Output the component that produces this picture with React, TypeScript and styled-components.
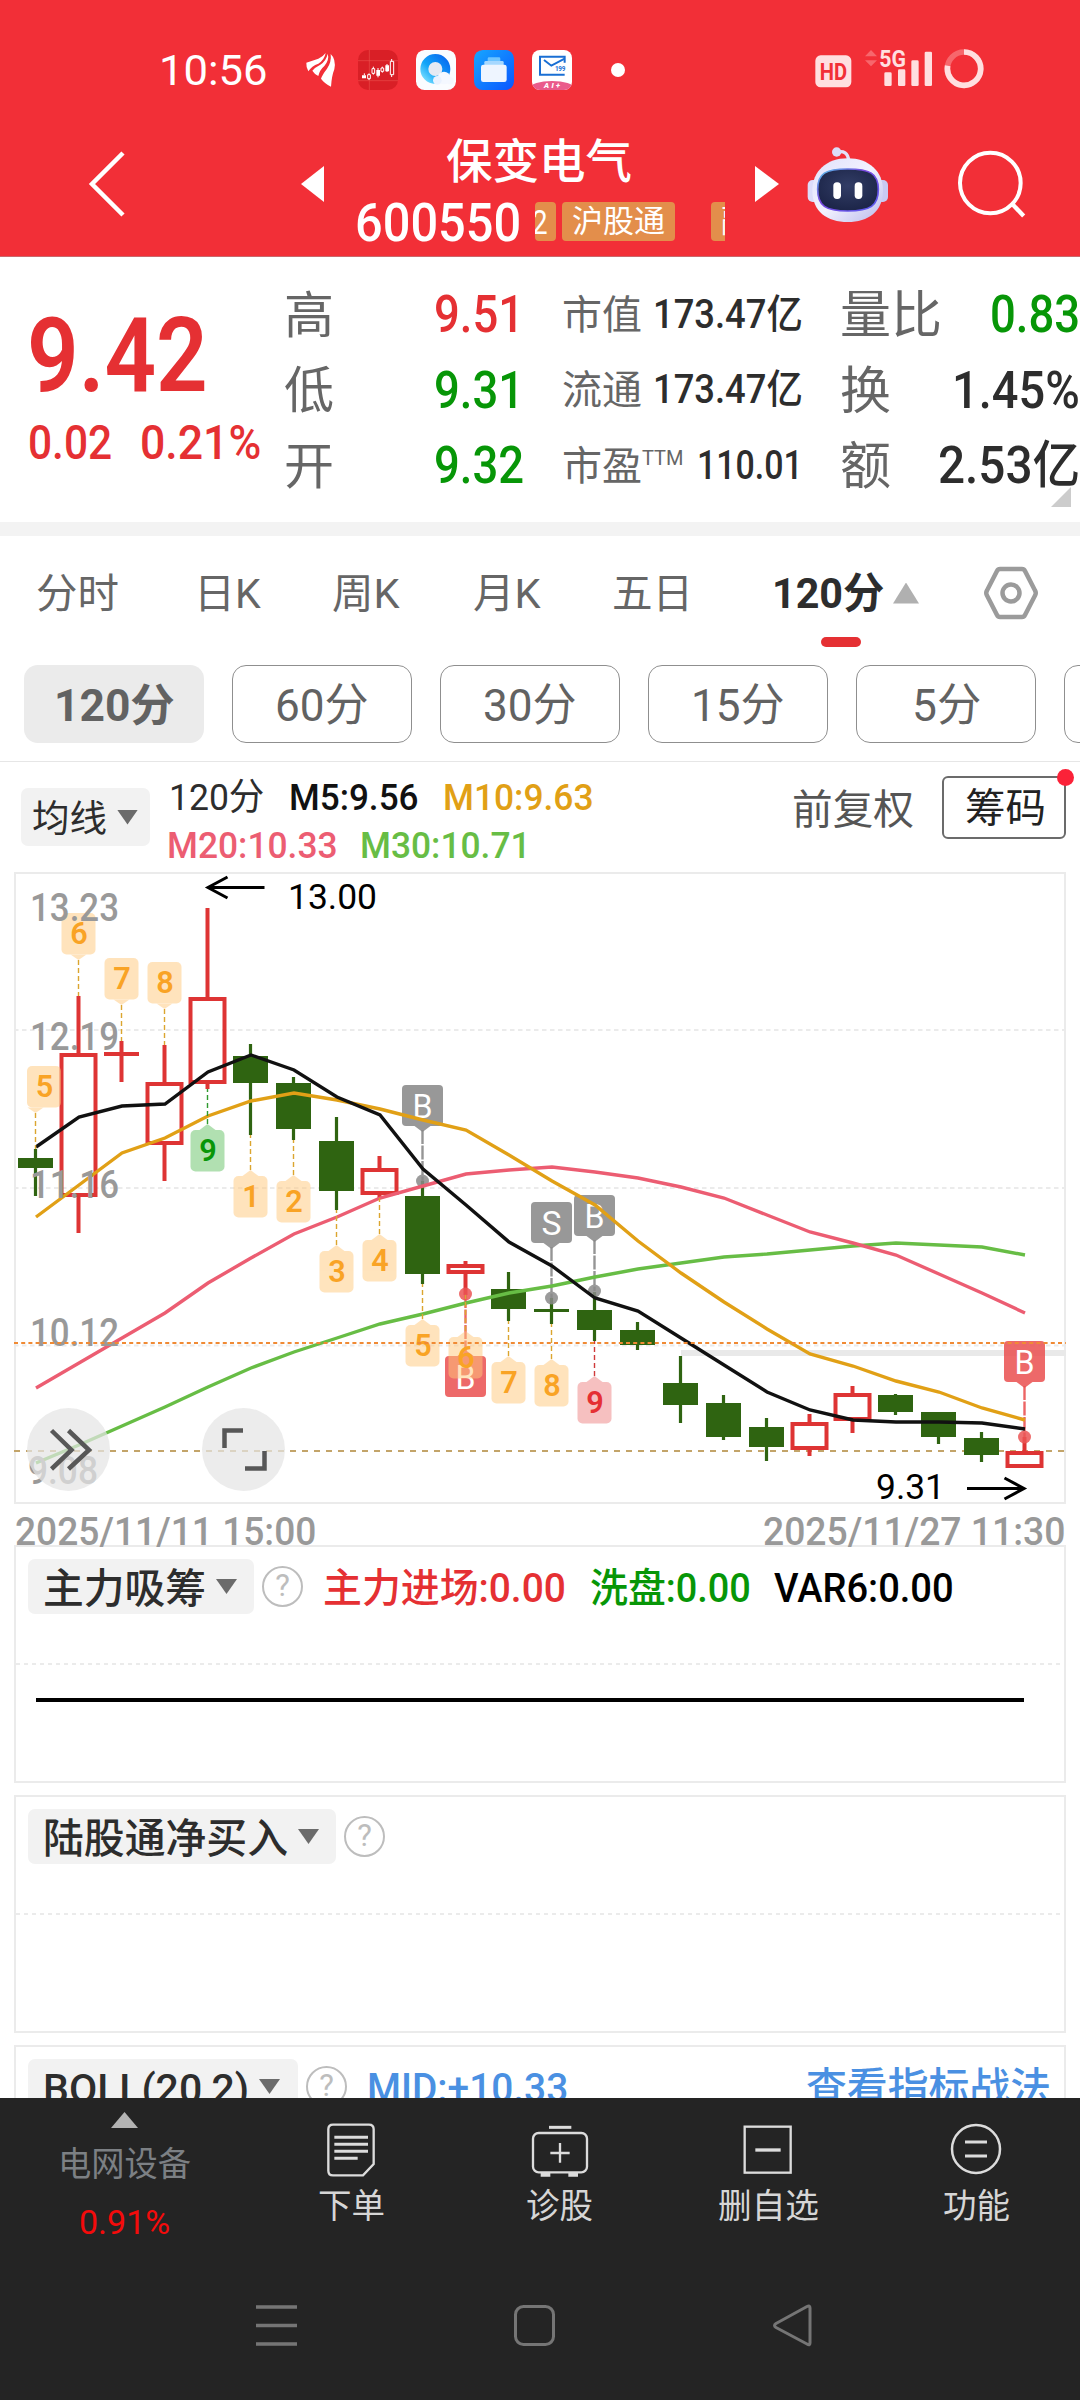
import React, { useLayoutEffect, useRef, useState } from 'react';
import styled, { createGlobalStyle } from 'styled-components';

const FONT = `Roboto, "Noto Sans CJK SC", sans-serif`;
const RED = '#e53033';
const GREEN = '#079607';
const DARK = '#2d2d2d';
const GREY = '#666';

const GlobalStyle = createGlobalStyle`
  * { box-sizing: border-box; }
  body { margin: 0; background: #fff; font-family: ${FONT}; }
  svg { display: block; flex: none; }
`;

/* ---------- condensed text that fills a given width ---------- */

const FitBox = styled.span<{ $w: number; $size: number; $weight: number; $color: string; $ml: number; $dy: number }>`
  display: block;
  flex: none;
  width: ${p => p.$w}px;
  margin-left: ${p => p.$ml}px;
  padding-top: ${p => p.$dy}px;
  font-size: ${p => p.$size}px;
  font-weight: ${p => p.$weight};
  color: ${p => p.$color};
  line-height: 1;
  white-space: pre;
`;
const FitInner = styled.span`
  display: inline-block;
  transform-origin: 0 50%;
`;

type FitProps = { w: number; size: number; weight?: number; color?: string; ml?: number; dy?: number; children: React.ReactNode };

function Fit({ w, size, weight = 400, color = 'inherit', ml = 0, dy = 0, children }: FitProps) {
  const ref = useRef<HTMLSpanElement>(null);
  const [scale, setScale] = useState(1);
  useLayoutEffect(() => {
    if (ref.current) setScale(w / ref.current.offsetWidth);
  }, [w, size, weight]);
  return (
    <FitBox $w={w} $size={size} $weight={weight} $color={color} $ml={ml} $dy={dy}>
      <FitInner ref={ref} style={{ transform: `scaleX(${scale})` }}>{children}</FitInner>
    </FitBox>
  );
}

/* ---------- page ---------- */

const Screen = styled.div`
  width: 1080px;
  height: 2400px;
  display: flex;
  flex-direction: column;
  overflow: hidden;
  background: #fff;
`;

const Header = styled.header`
  flex: none;
  height: 257px;
  background: #f22f37;
  border-bottom: 1px solid #c9686c;
  color: #fff;
`;

const StatusBar = styled.div`
  height: 112px;
  padding: 27px 96px 0 159px;
  display: flex;
  align-items: center;
`;
const AppIcons = styled.div`
  display: flex;
  align-items: center;
  gap: 18px;
  margin-left: 37px;
`;
const Dot = styled.i`
  width: 14px;
  height: 14px;
  border-radius: 50%;
  background: #fff;
  margin-left: 39px;
`;
const StatusRight = styled.div`
  display: flex;
  align-items: center;
  margin: -2px 0 0 auto;
`;

const TitleBar = styled.div`
  height: 144px;
  display: grid;
  grid-template-columns: 301px 23px 431px 24px 28px 82px 68px 1fr;
  align-items: center;
`;
const BackSlot = styled.div`
  padding-left: 88px;
`;
const TitleBlock = styled.div`
  height: 144px;
  padding-top: 23px;
  display: flex;
  flex-direction: column;
  gap: 15px;
`;
const NameLine = styled.div`
  height: 50px;
  padding-left: 122px;
`;
const CodeLine = styled.div`
  height: 42px;
  padding-left: 31px;
  display: flex;
  align-items: center;
`;
const TagStrip = styled.div`
  width: 190px;
  height: 39px;
  margin-left: 14px;
  display: flex;
  overflow: hidden;
`;
const Tag = styled.span<{ $w: number; $gap: number; $pad: number }>`
  flex: none;
  width: ${p => p.$w}px;
  height: 39px;
  margin-right: ${p => p.$gap}px;
  padding-left: ${p => p.$pad}px;
  border-radius: 4px;
  background: #e38e4b;
  font-size: 31px;
  line-height: 39px;
  white-space: nowrap;
`;

const Quote = styled.section`
  flex: none;
  position: relative;
  height: 265px;
  display: grid;
  grid-template-columns: 284px 278px 278px 240px;
`;
const PriceCell = styled.div`
  padding: 47px 0 0 27px;
`;
const ChangeLine = styled.div`
  display: flex;
  margin-top: 10px;
  padding-left: 1px;
`;
const Stats = styled.div`
  padding-top: 20px;
  display: flex;
  flex-direction: column;
`;
const StatRow = styled.div<{ $w: number; $size: number }>`
  width: ${p => p.$w}px;
  height: 75.5px;
  display: flex;
  align-items: center;
  justify-content: space-between;
  font-size: ${p => p.$size}px;
  line-height: 1;
  color: ${GREY};
  white-space: nowrap;
  sup { font-size: 20px; line-height: 0; vertical-align: 15px; }
`;
const StatLabel = styled.span`
  padding-top: 2px;
`;
const Corner = styled.i`
  position: absolute;
  right: 9px;
  bottom: 15px;
  border-style: solid;
  border-width: 0 0 20px 20px;
  border-color: transparent transparent #ccc transparent;
`;
const Band = styled.div`
  flex: none;
  height: 14px;
  background: #f3f3f3;
`;

const Tabs = styled.nav`
  flex: none;
  height: 129px;
  padding: 2px 42px 0 36px;
  display: flex;
  align-items: flex-start;
  color: ${GREY};
`;
const Tab = styled.div<{ $ml: number }>`
  margin-left: ${p => p.$ml}px;
  height: 110px;
  display: flex;
  align-items: center;
`;
const ActiveTab = styled.div`
  margin-left: 79px;
  height: 111px;
  width: 145px;
  display: grid;
  grid-template-rows: 99px 10px;
  justify-content: start;
`;
const ActiveLabel = styled.div`
  display: flex;
  align-items: center;
  gap: 9px;
  padding-top: 11px;
`;
const Underline = styled.i`
  width: 40px;
  height: 10px;
  margin-left: 49px;
  border-radius: 5px;
  background: ${RED};
`;
const Tri = styled.i<{ $w: number; $h: number; $color: string; $up?: boolean; $ml?: number }>`
  flex: none;
  width: ${p => p.$w}px;
  height: ${p => p.$h}px;
  margin-left: ${p => p.$ml ?? 0}px;
  background: ${p => p.$color};
  clip-path: ${p => (p.$up ? 'polygon(50% 0, 100% 100%, 0 100%)' : 'polygon(0 0, 100% 0, 50% 100%)')};
`;

const Chips = styled.div`
  flex: none;
  height: 97px;
  padding-left: 24px;
  display: flex;
  gap: 28px;
  overflow: hidden;
  border-bottom: 1px solid #e6e6e6;
`;
const Chip = styled.div<{ $on?: boolean }>`
  flex: none;
  width: 180px;
  height: 78px;
  display: flex;
  align-items: center;
  justify-content: center;
  border-radius: 14px;
  border: ${p => (p.$on ? 'none' : '1.5px solid #8f8f8f')};
  background: ${p => (p.$on ? '#ebebeb' : '#fff')};
  color: #626262;
`;

const MaBar = styled.div`
  flex: none;
  height: 110px;
  padding: 0 14px 0 21px;
  display: flex;
`;
const Picker = styled.div<{ $w: number; $h: number; $pad: number; $mt: number }>`
  flex: none;
  width: ${p => p.$w}px;
  height: ${p => p.$h}px;
  margin-top: ${p => p.$mt}px;
  padding-left: ${p => p.$pad}px;
  display: flex;
  align-items: center;
  border-radius: 7px;
  background: #f2f2f2;
  color: ${DARK};
`;
const MaLegend = styled.div`
  width: 460px;
  padding-top: 11px;
  display: grid;
  grid-template-rows: 48px 48px;
  align-items: center;
`;
const Line = styled.div`
  display: flex;
  align-items: center;
`;
const Adjust = styled.div`
  margin: 28px 0 0 auto;
`;
const ChipsButton = styled.div`
  position: relative;
  width: 124px;
  height: 63px;
  margin: 14px 0 0 28px;
  padding-left: 21px;
  display: flex;
  align-items: center;
  border: 2px solid #6b6b6b;
  border-radius: 6px;
`;
const Badge = styled.i`
  position: absolute;
  right: -10px;
  top: -9px;
  width: 17px;
  height: 17px;
  border-radius: 50%;
  background: #fb2238;
`;

const ChartWrap = styled.section`
  flex: none;
  height: 632px;
`;
const Dates = styled.div`
  flex: none;
  height: 41px;
  padding: 9px 15px 0 15px;
  display: flex;
  justify-content: space-between;
`;

const Panels = styled.section`
  flex: none;
  height: 553px;
  padding: 0 14px;
  display: flex;
  flex-direction: column;
  gap: 12px;
  overflow: hidden;
`;
const Panel = styled.div`
  flex: none;
  height: 238px;
  border: 2px solid #ebebeb;
`;
const PanelHead = styled.div`
  height: 80px;
  padding: 0 12px;
  display: flex;
  align-items: flex-start;
`;
const HeadText = styled.div`
  height: 83px;
  display: flex;
  align-items: center;
`;
const Help = styled.span`
  flex: none;
  width: 41px;
  height: 41px;
  margin: 19px 0 0 8px;
  border: 2.5px solid #bdbdbd;
  border-radius: 50%;
  font-size: 31px;
  line-height: 36px;
  text-align: center;
  color: #bdbdbd;
`;
const MidLine = styled.div`
  height: 2px;
  margin-top: 36px;
  background: repeating-linear-gradient(90deg, #ebebeb 0 4px, #fff 4px 8px);
`;
const FlatLine = styled.div`
  height: 4px;
  margin: 33px 40px 0 20px;
  background: #000;
`;

const Footer = styled.footer`
  flex: 1;
  background: #242424;
`;
const Actions = styled.div`
  height: 170px;
  display: grid;
  grid-template-columns: 247px 208px 209px 208px 208px;
  color: #d6d6d6;
`;
const Sector = styled.div`
  padding: 14px 0 0 58px;
  display: flex;
  flex-direction: column;
`;
const Action = styled.div`
  display: flex;
  flex-direction: column;
  align-items: center;
  gap: 11px;
  padding-top: 24px;
`;
const SystemNav = styled.div`
  height: 132px;
  padding: 35px 0 0 254px;
  display: flex;
  gap: 214px;
`;

/* ---------- chart data ---------- */

const X = (i: number) => 35.5 + 43 * i;

// [up, high, bodyTop, bodyBottom, low]
const candles: [number, number, number, number, number][] = [
  [0, 1149, 1158, 1168, 1196], [1, 996, 1053, 1197, 1233], [1, 1041, 1052, 1056, 1082], [1, 1045, 1082, 1145, 1181],
  [1, 908, 997, 1084, 1089], [0, 1044, 1056, 1083, 1135], [0, 1077, 1083, 1129, 1140], [0, 1117, 1141, 1191, 1210],
  [1, 1156, 1168, 1195, 1198], [0, 1181, 1196, 1274, 1284], [1, 1261, 1264, 1274, 1295], [0, 1272, 1289, 1309, 1321],
  [0, 1298, 1309, 1312, 1324], [0, 1292, 1310, 1330, 1341], [0, 1322, 1330, 1345, 1350], [0, 1356, 1383, 1405, 1423],
  [0, 1395, 1403, 1437, 1440], [0, 1418, 1427, 1447, 1461], [1, 1414, 1422, 1450, 1456], [1, 1386, 1393, 1421, 1433],
  [0, 1394, 1395, 1412, 1415], [0, 1412, 1412, 1437, 1444], [0, 1432, 1438, 1455, 1462], [1, 1437, 1451, 1468, 1468],
];

const averages: [string, number[]][] = [
  ['#67bd45', [1463, 1445, 1426, 1407, 1387, 1368, 1352, 1338, 1324, 1314, 1303, 1293, 1286, 1277, 1269, 1263, 1257, 1254, 1250, 1246, 1243, 1245, 1247, 1255]],
  ['#ec5d72', [1388, 1363, 1338, 1313, 1283, 1258, 1234, 1217, 1198, 1186, 1174, 1170, 1167, 1172, 1178, 1187, 1198, 1215, 1232, 1243, 1255, 1274, 1293, 1313]],
  ['#e1a016', [1217, 1185, 1153, 1138, 1116, 1101, 1093, 1100, 1109, 1120, 1130, 1155, 1181, 1205, 1241, 1273, 1302, 1329, 1354, 1366, 1381, 1392, 1408, 1420]],
  ['#111', [1147, 1117, 1106, 1104, 1072, 1055, 1070, 1097, 1115, 1169, 1205, 1242, 1266, 1298, 1311, 1338, 1365, 1392, 1410, 1420, 1422, 1422, 1423, 1429]],
];

type Tone = 'o' | 'g' | 'r';
const tones: Record<Tone, { bg: string; fg: string; line: string }> = {
  o: { bg: '#ffc97c', fg: '#f9a325', line: '#dba52f' },
  g: { bg: '#66c266', fg: '#089608', line: '#2f9a2f' },
  r: { bg: '#ee8282', fg: '#e53033', line: '#cf3a3a' },
};

// [index, digit, tip y, wick end y, above the candle, tone]
const counts: [number, string, number, number, boolean, Tone][] = [
  [0, '5', 1113, 1149, true, 'o'], [1, '6', 960, 996, true, 'o'], [2, '7', 1005, 1041, true, 'o'], [3, '8', 1009, 1045, true, 'o'],
  [4, '9', 1124, 1089, false, 'g'], [5, '1', 1170, 1135, false, 'o'], [6, '2', 1175, 1140, false, 'o'], [7, '3', 1245, 1210, false, 'o'],
  [8, '4', 1234, 1198, false, 'o'], [9, '5', 1319, 1284, false, 'o'], [10, '6', 1331, 1295, false, 'o'], [11, '7', 1356, 1321, false, 'o'],
  [12, '8', 1359, 1324, false, 'o'], [13, '9', 1376, 1341, false, 'r'],
];

// [index, letter, badge top, dot y, above the candle, colour]
const signals: [number, string, number, number, boolean, string][] = [
  [9, 'B', 1085, 1181, true, '#8a8a8a'], [12, 'S', 1202, 1298, true, '#8a8a8a'], [13, 'B', 1195, 1291, true, '#8a8a8a'],
  [10, 'B', 1356, 1294, false, '#eb5555'], [23, 'B', 1341, 1437, true, '#eb5555'],
];

const axis: [string, number, number, number][] = [
  ['13.23', 30, 921, 89], ['12.19', 30, 1050, 89], ['11.16', 30, 1198, 89], ['10.12', 30, 1346, 89], ['9.08', 28, 1484, 70],
];

function KLineChart() {
  return (
    <svg width="1080" height="632" viewBox="0 872 1080 632" fontFamily="Roboto, sans-serif">
      <rect x="15" y="873" width="1050" height="630" fill="#fff" stroke="#ebebeb" strokeWidth="2" />
      {[1030, 1188, 1345.5].map(y => (
        <path key={y} d={`M14 ${y}H1066`} stroke="#ebebeb" strokeWidth="2" strokeDasharray="4.5 3.5" />
      ))}
      <path d="M681 1353H1066" stroke="#e9e9e9" strokeWidth="6" />
      <path d="M14 1451H1066" stroke="#c3a469" strokeWidth="2" strokeDasharray="6 6" />

      {candles.map(([up, high, top, bottom, low], i) => {
        const x = X(i);
        if (i === 2) {
          return <path key={i} d={`M${x} ${high}V${low}M${x - 17.5} 1054H${x + 17.5}`} stroke="#de3434" strokeWidth="4" />;
        }
        return up ? (
          <g key={i} stroke="#de3434" fill="none">
            <path d={`M${x} ${high}V${top + 2}M${x} ${bottom - 2}V${low}`} strokeWidth="4" />
            <rect x={x - 17} y={top + 2} width="34" height={bottom - top - 4} strokeWidth="4" />
          </g>
        ) : (
          <g key={i} fill="#2f6411">
            <rect x={x - 1.6} y={high} width="3.2" height={low - high} />
            <rect x={x - 17.5} y={top} width="35" height={bottom - top} />
          </g>
        );
      })}

      {signals.map(([i, ch, top, dot, above, color]) => {
        const x = X(i);
        return (
          <g key={i}>
            <path d={above ? `M${x} ${top + 45}V${dot}` : `M${x} ${dot}V${top - 5}`} stroke={color} strokeWidth="2.4" strokeDasharray="14 1.5" opacity=".9" />
            <g fill={color} opacity=".88">
              <rect x={x - 20.5} y={top} width="41" height="41" rx="4" />
              <path d={above ? `M${x - 8} ${top + 41}h16l-8 6z` : `M${x - 8} ${top}h16l-8 -6z`} />
            </g>
            <circle cx={x} cy={dot} r="6.5" fill={color} opacity=".85" />
            <text x={x} y={top + 33} fontSize="34" fill="#fff" textAnchor="middle" textLength="20" lengthAdjust="spacingAndGlyphs">{ch}</text>
          </g>
        );
      })}

      {averages.map(([color, ys]) => (
        <polyline key={color} points={ys.map((y, i) => `${X(i) + 0.5},${y}`).join(' ')} fill="none" stroke={color} strokeWidth="3.4" />
      ))}

      {counts.map(([i, n, tip, wick, above, tone]) => {
        const x = X(i);
        const cx = i === 0 ? 44 : x;
        const top = above ? tip - 47 : tip + 6;
        const t = tones[tone];
        return (
          <g key={i}>
            <path d={`M${x} ${tip}V${wick}`} stroke={t.line} strokeWidth="1.4" strokeDasharray="5 3" />
            <g fill={t.bg} opacity=".5">
              <rect x={cx - 17} y={top} width="34" height="41.5" rx="5" />
              <path d={above ? `M${x - 8} ${top + 41.5}h16l-8 5.5z` : `M${x - 8} ${top}h16l-8 -6z`} />
            </g>
            <text x={cx + 0.5} y={top + 31} fontSize="32" fontWeight="600" fill={t.fg} textAnchor="middle" textLength="17.500" lengthAdjust="spacingAndGlyphs">{n}</text>
          </g>
        );
      })}

      {axis.map(([label, x, y, len]) => (
        <text key={label} x={x} y={y} fontSize="39.500" fontWeight="500" fill="#999" textLength={len} lengthAdjust="spacingAndGlyphs">{label}</text>
      ))}
      <path d="M14 1343H1066" stroke="#f08a34" strokeWidth="2" strokeDasharray="4 3.2" />

      <g stroke="#000" strokeWidth="3" fill="none">
        <path d="M264.500 887.500H208M227.500 877L208 887.500L227.500 898" />
        <path d="M967 1488.500H1024M1004.500 1478L1024 1488.500L1004.500 1499" />
      </g>
      <text x="288" y="909" fontSize="35" fill="#000" textLength="89" lengthAdjust="spacingAndGlyphs">13.00</text>
      <text x="876" y="1499" fontSize="35" fill="#000" textLength="69" lengthAdjust="spacingAndGlyphs">9.31</text>

      <circle cx="68.500" cy="1449.500" r="41.500" fill="#e4e4e4" opacity=".72" />
      <circle cx="243.500" cy="1449.500" r="41.500" fill="#e4e4e4" opacity=".72" />
      <g stroke="#575757" strokeWidth="4.500" fill="none">
        <path d="M51.500 1430.500L71.500 1450L51.500 1469M68.500 1430.500L89 1450L68.500 1469" />
        <path d="M224.500 1448V1430.500H243M264.500 1451V1468.500H245" />
      </g>
    </svg>
  );
}

/* ---------- status bar drawings ---------- */

function StatusIcons() {
  return (
    <AppIcons>
      <svg width="35" height="36" viewBox="10 66 105 108" fill="#fff">
        <path d="M14 98Q32 92 50 86Q64 80 72 69Q68 90 50 101Q30 108 20 124Q13 112 14 98Z" />
        <path d="M78 71Q84 88 68 108Q54 120 50 138Q38 132 32 122Q40 112 56 104Q74 92 78 71Z" />
        <path d="M87 72Q104 88 98 118Q90 138 88 170Q68 160 58 146Q62 134 76 116Q90 96 87 72Z" />
      </svg>
      <svg width="40" height="40" viewBox="0 0 120 120">
        <rect width="120" height="120" rx="30" fill="#d91f26" />
        <path d="M0 32H120M0 92H120M34 0V120" stroke="#ee5a55" strokeWidth="1.500" />
        <path d="M12 76h12v9h-12zM55 60h11v17h-11zM82 46h11v18h-11z" fill="#fff" />
        <path d="M19 70v6M60 54v28M87 42v24M33 70v20M46 50v24M73 50v18M101 27v54" stroke="#fff" strokeWidth="3" />
        <path d="M29 74h8v12h-8zM42 56h8v14h-8zM69 54h8v10h-8zM97 34h10v40h-10z" fill="#d91f26" stroke="#fff" strokeWidth="3" />
      </svg>
      <svg width="40" height="40" viewBox="0 0 120 120">
        <defs>
          <linearGradient id="qb" x1="1" y1="0" x2="0" y2="1"><stop offset="0" stopColor="#0a6cf0" /><stop offset=".6" stopColor="#12a5f8" /><stop offset="1" stopColor="#74dcff" /></linearGradient>
          <linearGradient id="fl" x1="0" y1="0" x2="1" y2="1"><stop offset="0" stopColor="#16a6ff" /><stop offset="1" stopColor="#0a55ff" /></linearGradient>
        </defs>
        <rect width="120" height="120" rx="26" fill="#fafcff" />
        <circle cx="58" cy="57" r="33" fill="#e6eaf3" stroke="url(#qb)" strokeWidth="24" />
        <circle cx="84" cy="84" r="19" fill="#f4f8ff" />
        <circle cx="64" cy="91" r="13" fill="#eaf2ff" />
        <circle cx="102" cy="92" r="11" fill="#f4f8ff" />
      </svg>
      <svg width="40" height="40" viewBox="0 0 120 120">
        <rect width="120" height="120" rx="26" fill="url(#fl)" />
        <rect x="41" y="22" width="38" height="14" rx="4" fill="#6ec4ff" />
        <rect x="31" y="33" width="58" height="16" rx="4" fill="#a6d8ff" />
        <rect x="21" y="44" width="77" height="52" rx="7" fill="#eef5ff" />
      </svg>
      <svg width="40" height="40" viewBox="0 0 120 120">
        <clipPath id="mc"><rect width="120" height="120" rx="24" /></clipPath>
        <g clipPath="url(#mc)">
          <rect width="120" height="120" fill="#fff" />
          <ellipse cx="60" cy="114" rx="66" ry="21" fill="#ea5b8b" />
          <path d="M98 38V20H24V74H98" fill="none" stroke="#1a6fd4" strokeWidth="6" />
          <path d="M36 30L58 47L98 26" fill="none" stroke="#1a6fd4" strokeWidth="6" />
          <text x="69" y="63" fontSize="19" fontWeight="700" fontFamily="Roboto" fill="#1a6fd4" textLength="31">199</text>
          <text x="36" y="115" fontSize="23" fontWeight="900" fontStyle="italic" fontFamily="Roboto" fill="#fff" textLength="48">AI+</text>
        </g>
      </svg>
    </AppIcons>
  );
}

function SignalIcons() {
  return (
    <svg width="169" height="44" viewBox="74 20 507 132">
      <rect x="75" y="45" width="108" height="96" rx="16" fill="#ffdfe0" />
      <text x="88" y="119" fontSize="74" fontWeight="700" fontFamily="Roboto" fill="#f22f37" textLength="82" lengthAdjust="spacingAndGlyphs">HD</text>
      <path d="M224 48L242 29L260 48ZM224 60L242 78L260 60Z" fill="#f7676c" />
      <text x="267" y="80" fontSize="74" fontWeight="700" fontFamily="Roboto" fill="#ffdfe0" textLength="80" lengthAdjust="spacingAndGlyphs">5G</text>
      <g fill="#ffdfe0">
        <rect x="282" y="96" width="22" height="41" rx="4" />
        <rect x="323" y="87" width="22" height="50" rx="4" />
        <rect x="363" y="60" width="22" height="77" rx="4" />
        <rect x="403" y="34" width="22" height="103" rx="4" />
      </g>
      <circle cx="521" cy="85" r="50" fill="none" stroke="#f7676c" strokeWidth="17" />
      <path d="M521 35A50 50 0 1 1 472 76" fill="none" stroke="#ffdfe0" strokeWidth="17" />
    </svg>
  );
}

function Robot() {
  return (
    <svg width="82" height="77" viewBox="50 312 246 231">
      <defs>
        <linearGradient id="rb" x1="0" y1="0" x2="1" y2="1"><stop offset="0" stopColor="#dfe1fb" /><stop offset=".5" stopColor="#f3f2ff" /><stop offset="1" stopColor="#b9b9ea" /></linearGradient>
        <linearGradient id="rf" x1="0" y1="0" x2="1" y2="1"><stop offset="0" stopColor="#55c8e8" /><stop offset=".4" stopColor="#7a48e0" /><stop offset="1" stopColor="#5a5cf0" /></linearGradient>
        <radialGradient id="rv" cx=".5" cy=".4" r=".6"><stop offset="0" stopColor="#323d66" /><stop offset="1" stopColor="#1c2548" /></radialGradient>
      </defs>
      <path d="M138 331Q172 322 175 356" fill="none" stroke="#e3e1f8" strokeWidth="10" />
      <circle cx="139" cy="330" r="14" fill="#dcdcf8" />
      <rect x="52" y="414" width="34" height="66" rx="15" fill="#dcdcfa" />
      <rect x="259" y="414" width="34" height="66" rx="15" fill="#c9c9f2" />
      <path d="M172 349C236 349 278 388 278 446C278 508 234 540 172 540C110 540 66 508 66 446C66 388 108 349 172 349Z" fill="url(#rb)" />
      <path d="M172 381C238 381 264 394 264 442C264 492 240 507 172 507C106 507 82 492 82 442C82 394 106 381 172 381Z" fill="url(#rv)" stroke="url(#rf)" strokeWidth="5" />
      <rect x="129" y="421" width="23" height="50" rx="11" fill="#fff" />
      <rect x="193" y="421" width="23" height="50" rx="11" fill="#fff" />
    </svg>
  );
}

/* ---------- repeated parts ---------- */

type PickProps = { w: number; tw: number; label: string };
const IndicatorPicker = ({ w, tw, label }: PickProps) => (
  <Picker $w={w} $h={55} $pad={15} $mt={12}>
    <Fit w={tw} size={41} weight={500} dy={5}>{label}</Fit>
    <Tri $w={21} $h={15} $color="#6b6b6b" $ml={10} />
  </Picker>
);

type StatProps = { w: number; size: number; label: React.ReactNode; vw: number; vs: number; value: string; color?: string };
const Stat = ({ w, size, label, vw, vs, value, color = DARK }: StatProps) => (
  <StatRow $w={w} $size={size}>
    <StatLabel>{label}</StatLabel>
    <Fit w={vw} size={vs} weight={500} color={color}>{value}</Fit>
  </StatRow>
);

export default function App() {
  return (
    <>
      <GlobalStyle />
      <Screen>
        <Header>
          <StatusBar>
            <Fit w={109} size={42} dy={2}>10:56</Fit>
            <StatusIcons />
            <Dot />
            <StatusRight><SignalIcons /></StatusRight>
          </StatusBar>
          <TitleBar>
            <BackSlot>
              <svg width="38" height="66" viewBox="0 0 38 66" fill="none" stroke="#fff" strokeWidth="4.500"><path d="M35 2L4 33L35 64" /></svg>
            </BackSlot>
            <svg width="23" height="36" viewBox="0 0 23 36" fill="#fff"><path d="M23 0V36L0 18Z" /></svg>
            <TitleBlock>
              <NameLine><Fit w={186} size={47} weight={500} dy={3}>保变电气</Fit></NameLine>
              <CodeLine>
                <Fit w={166} size={54} weight={500} dy={3}>600550</Fit>
                <TagStrip>
                  <Tag $w={21} $gap={6} $pad={0}><Fit w={16} size={33} ml={-3} dy={4}>2</Fit></Tag>
                  <Tag $w={113} $gap={36} $pad={10}>沪股通</Tag>
                  <Tag $w={60} $gap={0} $pad={10}>融</Tag>
                </TagStrip>
              </CodeLine>
            </TitleBlock>
            <svg width="24" height="36" viewBox="0 0 24 36" fill="#fff"><path d="M0 0V36L24 18Z" /></svg>
            <span />
            <Robot />
            <span />
            <svg width="70" height="70" viewBox="500 330 210 210" fill="none" stroke="#fff"><circle cx="600" cy="432" r="91" strokeWidth="12" /><path d="M663 492L700 531" strokeWidth="13" /></svg>
          </TitleBar>
        </Header>

        <Quote>
          <PriceCell>
            <Fit w={181} size={104} weight={600} color={RED}>9.42</Fit>
            <ChangeLine>
              <Fit w={84} size={49} weight={500} color={RED}>0.02</Fit>
              <Fit w={121} size={49} weight={500} color={RED} ml={28}>0.21%</Fit>
            </ChangeLine>
          </PriceCell>
          <Stats>
            <Stat w={240} size={50} label="高" vw={90} vs={51} value="9.51" color={RED} />
            <Stat w={240} size={50} label="低" vw={90} vs={51} value="9.31" color={GREEN} />
            <Stat w={240} size={50} label="开" vw={90} vs={51} value="9.32" color={GREEN} />
          </Stats>
          <Stats>
            <Stat w={241} size={40} label="市值" vw={150} vs={40} value="173.47亿" />
            <Stat w={241} size={40} label="流通" vw={150} vs={40} value="173.47亿" />
            <Stat w={241} size={40} label={<>市盈<sup>TTM</sup></>} vw={106} vs={40} value="110.01" />
          </Stats>
          <Stats>
            <Stat w={240} size={51} label="量比" vw={90} vs={51} value="0.83" color={GREEN} />
            <Stat w={240} size={51} label="换" vw={128} vs={51} value="1.45%" />
            <Stat w={240} size={51} label="额" vw={142} vs={51} value="2.53亿" />
          </Stats>
          <Corner />
        </Quote>
        <Band />

        <Tabs>
          <Tab $ml={0}><Fit w={83} size={41} dy={2}>分时</Fit></Tab>
          <Tab $ml={75}><Fit w={67} size={41} dy={2}>日K</Fit></Tab>
          <Tab $ml={71}><Fit w={68} size={41} dy={2}>周K</Fit></Tab>
          <Tab $ml={73}><Fit w={68} size={41} dy={2}>月K</Fit></Tab>
          <Tab $ml={71}><Fit w={81} size={41} dy={2}>五日</Fit></Tab>
          <ActiveTab>
            <ActiveLabel>
              <Fit w={112} size={42} weight={700} color={DARK} dy={2}>120分</Fit>
              <Tri $w={26} $h={21} $color="#b0b0b0" $up />
            </ActiveLabel>
            <Underline />
          </ActiveTab>
          <Tab $ml={66}>
            <svg width="56" height="54" viewBox="0 0 56 54" fill="none" stroke="#9b9b9b" strokeWidth="4.500"><path d="M17 3H39Q41 3 42 5L52 24.500Q53.500 27 52 29.500L42 49Q41 51 39 51H17Q15 51 14 49L4 29.500Q2.500 27 4 24.500L14 5Q15 3 17 3Z" /><circle cx="28" cy="27" r="8.500" /></svg>
          </Tab>
        </Tabs>

        <Chips>
          <Chip $on><Fit w={121} size={44} weight={700} dy={3}>120分</Fit></Chip>
          <Chip><Fit w={94} size={45} dy={3}>60分</Fit></Chip>
          <Chip><Fit w={94} size={45} dy={3}>30分</Fit></Chip>
          <Chip><Fit w={94} size={45} dy={3}>15分</Fit></Chip>
          <Chip><Fit w={69} size={45} dy={3}>5分</Fit></Chip>
          <Chip />
        </Chips>

        <MaBar>
          <Picker $w={129} $h={58} $pad={11} $mt={26}>
            <Fit w={75} size={37} dy={4}>均线</Fit>
            <Tri $w={21} $h={15} $color="#6b6b6b" $ml={10} />
          </Picker>
          <MaLegend>
            <Line>
              <Fit w={95} size={37} ml={19} color={DARK}>120分</Fit>
              <Fit w={130} size={37} ml={25} weight={500} color="#111">M5:9.56</Fit>
              <Fit w={151} size={37} ml={24} weight={500} color="#e1a016">M10:9.63</Fit>
            </Line>
            <Line>
              <Fit w={171} size={37} ml={17} weight={500} color="#ec5d72">M20:10.33</Fit>
              <Fit w={171} size={37} ml={22} weight={500} color="#67bd45">M30:10.71</Fit>
            </Line>
          </MaLegend>
          <Adjust><Fit w={122} size={41} color="#555">前复权</Fit></Adjust>
          <ChipsButton>
            <Fit w={81} size={40} color="#222" dy={3}>筹码</Fit>
            <Badge />
          </ChipsButton>
        </MaBar>

        <ChartWrap><KLineChart /></ChartWrap>
        <Dates>
          <Fit w={301} size={39} weight={500} color="#999">2025/11/11 15:00</Fit>
          <Fit w={302} size={39} weight={500} color="#999">2025/11/27 11:30</Fit>
        </Dates>

        <Panels>
          <Panel>
            <PanelHead>
              <IndicatorPicker w={226} tw={163} label="主力吸筹" />
              <Help>?</Help>
              <HeadText>
                <Fit w={243} size={40} ml={20} weight={500} color={RED}>主力进场:0.00</Fit>
                <Fit w={161} size={40} ml={24} weight={500} color={GREEN}>洗盘:0.00</Fit>
                <Fit w={180} size={40} ml={23} weight={500} color="#000">VAR6:0.00</Fit>
              </HeadText>
            </PanelHead>
            <MidLine />
            <FlatLine />
          </Panel>
          <Panel>
            <PanelHead>
              <IndicatorPicker w={308} tw={245} label="陆股通净买入" />
              <Help>?</Help>
            </PanelHead>
            <MidLine />
          </Panel>
          <Panel>
            <PanelHead>
              <IndicatorPicker w={270} tw={206} label="BOLL(20,2)" />
              <Help>?</Help>
              <HeadText>
                <Fit w={201} size={40} ml={20} weight={500} color="#4a90e2">MID:+10.33</Fit>
                <Fit w={245} size={41} ml={238} weight={500} color="#4a90e2">查看指标战法</Fit>
              </HeadText>
            </PanelHead>
          </Panel>
        </Panels>

        <Footer>
          <Actions>
            <Sector>
              <Tri $w={27} $h={16} $color="#b3b3b3" $up $ml={53} />
              <Fit w={133} size={34} color="#7c8084" dy={19}>电网设备</Fit>
              <Fit w={91} size={34} color="#f40b0b" ml={21} dy={24}>0.91%</Fit>
            </Sector>
            <Action>
              <svg width="50" height="56" viewBox="51 36 150 168" fill="none" stroke="#dcdcdc" strokeWidth="7"><path d="M72 44H180Q194 44 194 58V162L162 196H72Q58 196 58 182V58Q58 44 72 44Z" /><path d="M76 82H177M76 103H177M76 124H177M76 145H146" strokeWidth="9" /></svg>
              <Fit w={67} size={34}>下单</Fit>
            </Action>
            <Action>
              <svg width="58" height="56" viewBox="663 36 174 168" fill="none" stroke="#dcdcdc" strokeWidth="7"><path d="M717 52H784" strokeWidth="9" /><rect x="669" y="69" width="162" height="118" rx="17" /><path d="M750 99V158M721 129H779" /><path d="M692 194H721M775 194H804" strokeWidth="12" /></svg>
              <Fit w={67} size={34}>诊股</Fit>
            </Action>
            <Action>
              <svg width="50" height="56" viewBox="1298 34 150 168" fill="none" stroke="#dcdcdc" strokeWidth="7"><rect x="1303" y="48" width="138" height="138" /><path d="M1335 118H1411" strokeWidth="10" /></svg>
              <Fit w={101} size={34}>删自选</Fit>
            </Action>
            <Action>
              <svg width="54" height="56" viewBox="0 0 54 56" fill="none" stroke="#dcdcdc" strokeWidth="2.500"><circle cx="27" cy="27" r="24" /><path d="M16 20H38M16 34H38" strokeWidth="3" /></svg>
              <Fit w={67} size={34}>功能</Fit>
            </Action>
          </Actions>
          <SystemNav>
            <svg width="44" height="44" viewBox="0 0 44 44" stroke="#757575" strokeWidth="3.500"><path d="M2 4H43M2 22.500H43M2 41H43" /></svg>
            <svg width="44" height="44" viewBox="0 0 44 44" fill="none" stroke="#757575" strokeWidth="3"><rect x="3.500" y="3.500" width="38" height="38" rx="8" /></svg>
            <svg width="44" height="44" viewBox="0 0 44 44" fill="none" stroke="#757575" strokeWidth="3" strokeLinejoin="round"><path d="M40 5V40Q40 43 37 41L6 24.500Q3 22.500 6 20.500L37 3.500Q40 2 40 5Z" /></svg>
          </SystemNav>
        </Footer>
      </Screen>
    </>
  );
}
